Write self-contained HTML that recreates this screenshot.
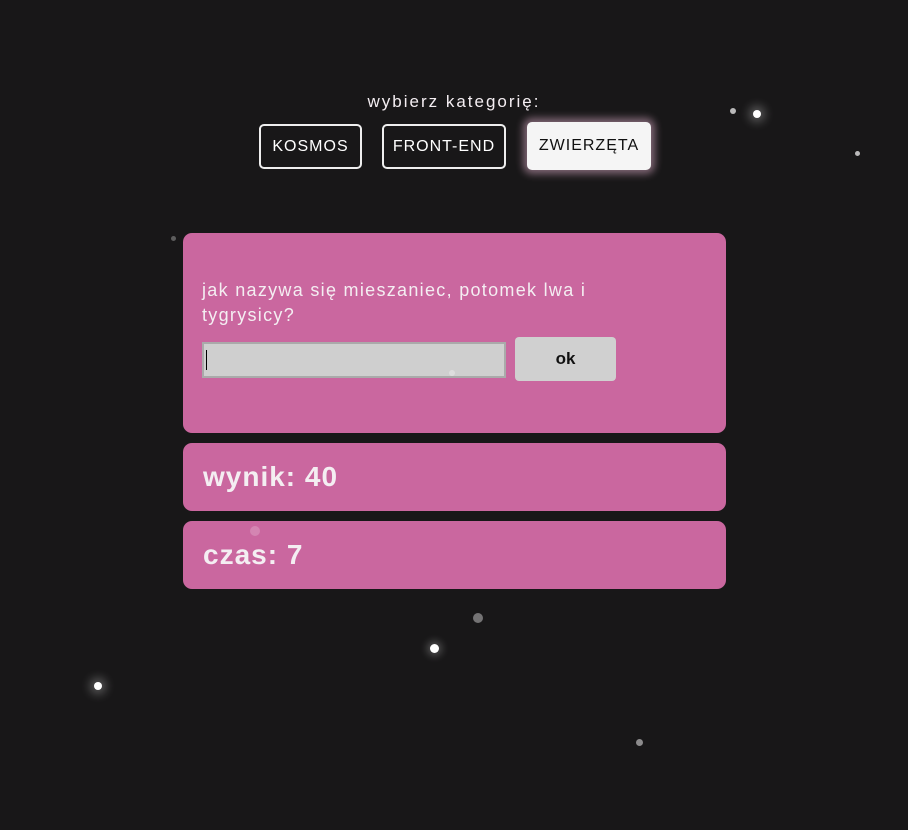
<!DOCTYPE html>
<html><head><meta charset="utf-8"><style>
*{margin:0;padding:0;box-sizing:border-box}
body{width:908px;height:830px;background:#181718;position:relative;overflow:hidden;font-family:"Liberation Sans","DejaVu Sans",sans-serif;color:#f4eef2}
.s{position:absolute;border-radius:50%;background:#fff}
h1{position:absolute;top:92px;left:0;width:908px;text-align:center;font-size:17px;font-weight:normal;letter-spacing:2px}
.b{position:absolute;top:124px;height:45px;border:2px solid #eee;border-radius:5px;font-size:16px;display:flex;align-items:center;justify-content:center;letter-spacing:1px;color:#fff}
.card{position:absolute;left:183px;width:543px;background:#ca679f;border-radius:9px}
.q{position:absolute;left:202px;top:278px;font-size:18px;line-height:25px;width:430px;letter-spacing:1.3px}
.in{position:absolute;left:202px;top:342px;width:304px;height:36px;background:#cfcfcf;border:2px solid #aaa}
.in:after{content:"";position:absolute;left:2px;top:6px;width:1px;height:20px;background:#000}
.ok{position:absolute;left:515px;top:337px;width:101px;height:44px;background:#d0d0d0;border-radius:4px;color:#111;font-size:17px;font-weight:bold;display:flex;align-items:center;justify-content:center}
.t{position:absolute;left:203px;font-size:28px;font-weight:bold;letter-spacing:1px}
</style></head><body>
<div class="s" style="left:753px;top:110px;width:8px;height:8px;box-shadow:0 0 10px 4px rgba(255,255,255,.3)"></div>
<div class="s" style="left:730px;top:108px;width:6px;height:6px;opacity:.7"></div>
<div class="s" style="left:855px;top:151px;width:5px;height:5px;opacity:.7"></div>
<div class="s" style="left:94px;top:682px;width:8px;height:8px;box-shadow:0 0 10px 4px rgba(255,255,255,.3)"></div>
<div class="s" style="left:430px;top:644px;width:9px;height:9px;box-shadow:0 0 8px 3px rgba(255,255,255,.25)"></div>
<div class="s" style="left:473px;top:613px;width:10px;height:10px;opacity:.4"></div>
<div class="s" style="left:636px;top:739px;width:7px;height:7px;opacity:.5"></div>
<div class="s" style="left:171px;top:236px;width:5px;height:5px;opacity:.3"></div>
<h1>wybierz kategorię:</h1>
<div class="b" style="left:259px;width:103px">KOSMOS</div>
<div class="b" style="left:382px;width:124px">FRONT-END</div>
<div class="b" style="left:527px;top:122px;height:48px;width:124px;background:#f5f5f5;color:#111;border:none;box-shadow:0 0 8px 4px rgba(255,200,230,.45)">ZWIERZĘTA</div>
<div class="card" style="top:233px;height:200px"></div>
<div class="q">jak nazywa się mieszaniec, potomek lwa i tygrysicy?</div>
<div class="in"></div>
<div class="ok">ok</div>
<div class="card" style="top:443px;height:68px"></div>
<div class="t" style="top:461px">wynik: 40</div>
<div class="card" style="top:521px;height:68px"></div>
<div class="t" style="top:539px">czas: 7</div>
<div class="s" style="left:250px;top:526px;width:10px;height:10px;opacity:.2"></div>
<div class="s" style="left:449px;top:370px;width:6px;height:6px;opacity:.3"></div>
</body></html>
